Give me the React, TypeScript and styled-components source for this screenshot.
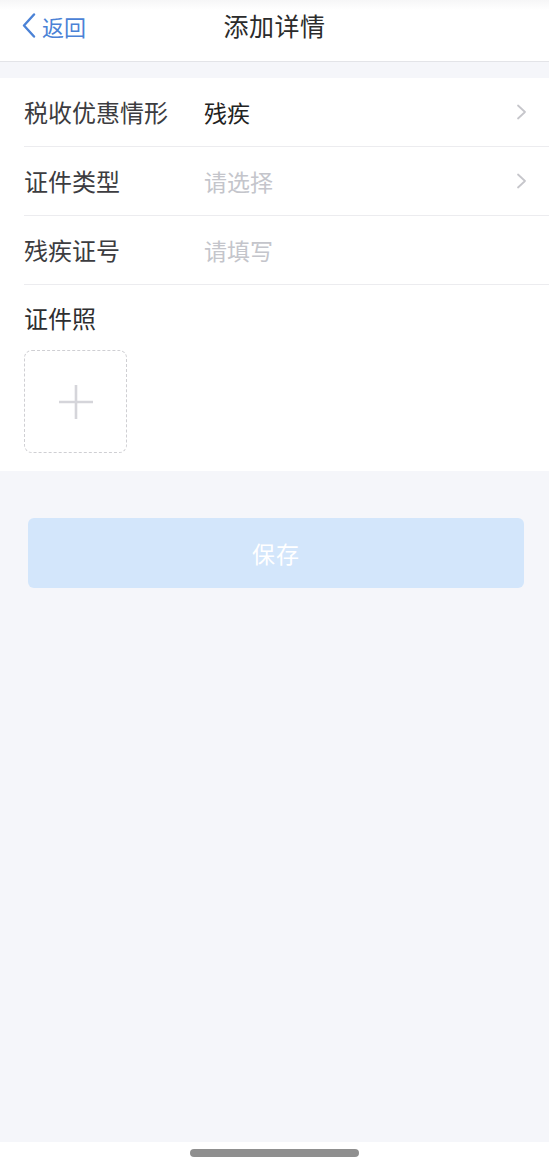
import styled, { createGlobalStyle } from 'styled-components';

// ─── Global ───────────────────────────────────────────────────────────────────

const GlobalStyle = createGlobalStyle`
  html, body {
    margin: 0;
    padding: 0;
    background: #f5f6fa;
  }
  body {
    font-family: 'Noto Sans CJK SC', 'Noto Sans', sans-serif;
    -webkit-font-smoothing: antialiased;
  }
  * { box-sizing: border-box; }
`;

// ─── Styled Components ────────────────────────────────────────────────────────

const Page = styled.div`
  min-height: 100vh;
  display: flex;
  flex-direction: column;
  background: #f5f6fa;
`;

const NavBar = styled.header`
  height: 62px;
  display: grid;
  grid-template-columns: 1fr auto 1fr;
  align-items: center;
  padding: 0 22px 10px;
  background: linear-gradient(180deg, #f6f6f7 0px, #ffffff 10px);
  border-bottom: 1px solid #e3e4e8;
`;

const BackButton = styled.button`
  justify-self: start;
  display: flex;
  align-items: center;
  gap: 6px;
  padding: 0;
  border: none;
  background: none;
  color: #4b82d6;
  font-family: inherit;
  font-size: 22px;
  line-height: 1;
  cursor: pointer;
`;

const NavTitle = styled.h1`
  margin: 0;
  font-size: 25px;
  font-weight: 400;
  line-height: 1;
  color: #2b2b2b;
  letter-spacing: 0.5px;
`;

const FormCard = styled.section`
  margin-top: 16px;
  background: #fff;
  padding-left: 24px;
`;

const Row = styled.div`
  height: 69px;
  display: flex;
  align-items: center;
  padding-right: 22px;
  border-bottom: 1px solid #ececef;
`;

const Label = styled.span`
  width: 180px;
  flex-shrink: 0;
  font-size: 24px;
  color: #3c3c40;
  line-height: 1;
`;

const Value = styled.span<{ $placeholder?: boolean }>`
  flex: 1;
  font-size: 23px;
  line-height: 1;
  color: ${({ $placeholder }) => ($placeholder ? '#c4c5cb' : '#222')};
`;

const UploadBlock = styled.div`
  padding: 21px 0 18px;
`;

const UploadLabel = styled.div`
  font-size: 24px;
  line-height: 24px;
  color: #2e2e30;
`;

const UploadBox = styled.button`
  margin-top: 20px;
  width: 103px;
  height: 103px;
  display: flex;
  align-items: center;
  justify-content: center;
  border: 1px dashed #cfcfd3;
  border-radius: 8px;
  background: #fff;
  padding: 0;
  cursor: pointer;
`;

const SaveButton = styled.button`
  margin: 47px 25px 0 28px;
  height: 70px;
  border: none;
  border-radius: 6px;
  background: #d3e6fb;
  color: #fff;
  font-family: inherit;
  font-size: 23px;
  letter-spacing: 1px;
`;

const HomeArea = styled.div`
  margin-top: auto;
  height: 24px;
  background: #fff;
  display: flex;
  justify-content: center;
  padding-top: 7px;
`;

const HomeBar = styled.div`
  width: 169px;
  height: 8px;
  border-radius: 4px;
  background: #8f8f8f;
`;

// ─── Icons ────────────────────────────────────────────────────────────────────

const BackChevron = () => (
  <svg width="14" height="25" viewBox="0 0 14 25" fill="none">
    <polyline
      points="12,1.5 2,12.5 12,23.5"
      stroke="#4b82d6"
      strokeWidth="2.4"
      strokeLinecap="round"
      strokeLinejoin="round"
    />
  </svg>
);

const RowChevron = () => (
  <svg width="11" height="16" viewBox="0 0 11 16" fill="none">
    <polyline
      points="2,1.5 9,8 2,14.5"
      stroke="#c6c6cb"
      strokeWidth="1.8"
      strokeLinecap="round"
      strokeLinejoin="round"
    />
  </svg>
);

const PlusIcon = () => (
  <svg width="38" height="38" viewBox="0 0 38 38">
    <path d="M19 2v34M2 19h34" stroke="#d5d5da" strokeWidth="2.6" />
  </svg>
);

// ─── Component ────────────────────────────────────────────────────────────────

const rows = [
  { label: '税收优惠情形', value: '残疾', placeholder: false, arrow: true },
  { label: '证件类型', value: '请选择', placeholder: true, arrow: true },
  { label: '残疾证号', value: '请填写', placeholder: true, arrow: false },
];

export default function App() {
  return (
    <>
      <GlobalStyle />
      <Page>
        <NavBar>
          <BackButton>
            <BackChevron />
            返回
          </BackButton>
          <NavTitle>添加详情</NavTitle>
          <span />
        </NavBar>

        <FormCard>
          {rows.map((r) => (
            <Row key={r.label}>
              <Label>{r.label}</Label>
              <Value $placeholder={r.placeholder}>{r.value}</Value>
              {r.arrow && <RowChevron />}
            </Row>
          ))}
          <UploadBlock>
            <UploadLabel>证件照</UploadLabel>
            <UploadBox>
              <PlusIcon />
            </UploadBox>
          </UploadBlock>
        </FormCard>

        <SaveButton>保存</SaveButton>

        <HomeArea>
          <HomeBar />
        </HomeArea>
      </Page>
    </>
  );
}
